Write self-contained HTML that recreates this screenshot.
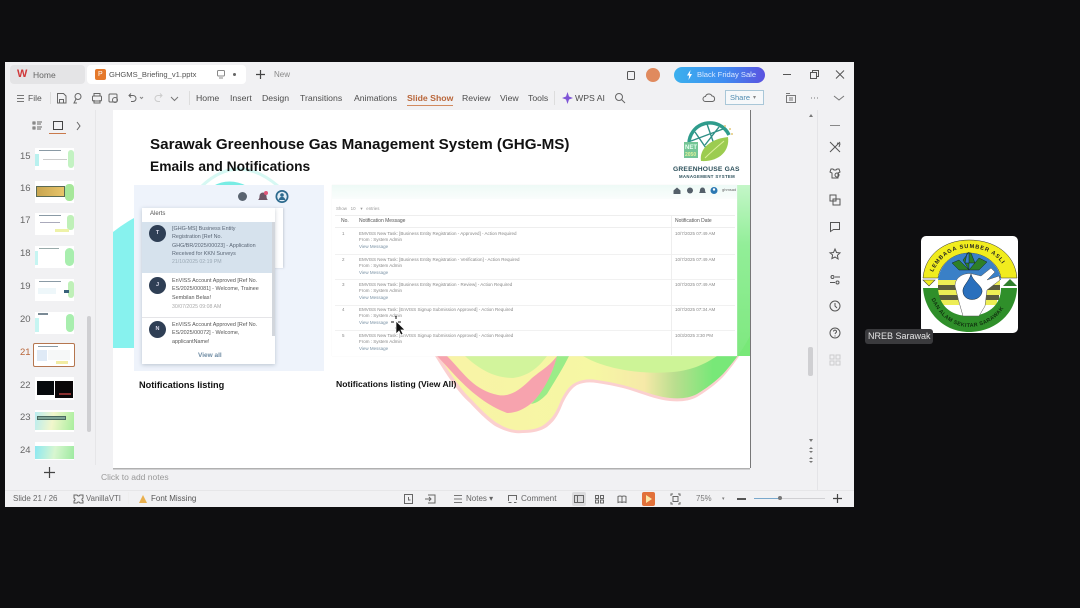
<!DOCTYPE html>
<html><head><meta charset="utf-8">
<style>
html,body{margin:0;padding:0;width:1080px;height:608px;overflow:hidden;background:#0e0e10;font-family:"Liberation Sans",sans-serif}
.a,.t{position:absolute}
.t{white-space:nowrap;color:#555;line-height:1}
#win{left:5px;top:62px;width:849px;height:445px;background:#f1f1f3;overflow:hidden}
svg.a{overflow:visible}
.mi{font-size:8.7px;color:#4d4d4d;top:94px}
.n{font-size:9.5px;color:#666;left:20px}
.th{left:35px;width:39px;height:22px;background:#fff;overflow:hidden}
.th i{position:absolute;display:block}
.nt{font-size:5.4px;color:#555;line-height:8.4px;white-space:nowrap}
.r{font-size:4.5px;color:#888;white-space:nowrap;line-height:6.3px}
.r b{font-weight:normal;color:#7b93a6}
.av{width:17px;height:17px;border-radius:50%;background:#2f3f55;color:#dde;font-size:5.5px;font-weight:bold;text-align:center;line-height:17px}
</style></head><body>
<div class="a" id="win" style="position:absolute"></div>

<!-- tab bar -->
<div class="a" style="left:10px;top:65px;width:75px;height:19px;background:#e4e4e6;border-radius:4px"></div>
<div class="a" style="left:87px;top:65px;width:159px;height:19px;background:#fff;border-radius:4px"></div>
<div class="t" style="left:17px;top:69px;font-size:11px;font-weight:bold;color:#d0383a">W</div>
<div class="t" style="left:33px;top:71px;font-size:8.5px;color:#666">Home</div>
<div class="a" style="left:95px;top:69px;width:11px;height:11px;background:#e5792b;border-radius:2px"></div>
<div class="t" style="left:98px;top:71px;font-size:7px;color:#fff">P</div>
<div class="t" style="left:109px;top:71px;font-size:7.6px;color:#555">GHGMS_Briefing_v1.pptx</div>
<svg class="a" style="left:216px;top:69px" width="10" height="10" fill="none" stroke="#888"><rect x="1.5" y="1.5" width="7" height="5.5" rx="1"/><path d="M3 9h4"/></svg>
<div class="a" style="left:233px;top:73px;width:3px;height:3px;border-radius:50%;background:#666"></div>
<svg class="a" style="left:255px;top:69px" width="11" height="11" stroke="#444" stroke-width="1.2"><path d="M5.5 1v9M1 5.5h9"/></svg>
<div class="t" style="left:274px;top:71px;font-size:8px;color:#888">New</div>
<svg class="a" style="left:626px;top:70px" width="10" height="10" fill="none" stroke="#555"><rect x="1.5" y="1.5" width="7" height="8" rx="1"/></svg>
<div class="a" style="left:646px;top:68px;width:14px;height:14px;border-radius:50%;background:#e08a5e"></div>
<div class="a" style="left:674px;top:67px;width:91px;height:16px;border-radius:8px;background:linear-gradient(90deg,#3bb0ee,#3f8cf0 55%,#5b52e0)"></div>
<svg class="a" style="left:686px;top:70px" width="7" height="10"><path d="M4.500 0L1 5.500h2.200L2.500 10 6 4H3.800z" fill="#fff"/></svg>
<div class="t" style="left:697px;top:71px;font-size:7.6px;color:#dbe9ff">Black Friday Sale</div>
<svg class="a" style="left:782px;top:69px" width="65" height="11" fill="none" stroke="#555"><path d="M1 5.5h8"/><rect x="28.5" y="3.5" width="6" height="6"/><path d="M30.5 3.5v-2h6v6h-2"/><path d="M54 1.5l8 8M62 1.5l-8 8"/></svg>

<!-- menu bar -->
<svg class="a" style="left:17px;top:94px" width="8" height="9" stroke="#777"><path d="M0 1.5h7M0 4.5h7M0 7.5h7"/></svg>
<div class="t" style="left:28px;top:94px;font-size:8.5px;color:#555">File</div>
<div class="a" style="left:50px;top:92px;width:1px;height:12px;background:#ddd"></div>
<svg class="a" style="left:56px;top:92px" width="130" height="13" fill="none" stroke="#666"><path d="M1.5 1.5h6l2.500 2.500v7h-8.500zM3.500 11V7.500h4V11"/><circle cx="22" cy="4.500" r="3"/><path d="M20 7l-2 4h3"/><rect x="36.500" y="4" width="9" height="5" rx="1"/><path d="M38 4V1.500h6V4M38 8v3h6V8"/><rect x="53" y="2" width="8" height="8" rx="1"/><circle cx="59" cy="8" r="2.500"/><path d="M73 3.500h4a3 3 0 0 1 0 6h-2M75 1.500l-2 2 2 2"/><path d="M84 5l1.500 1.500L87 5" stroke="#888"/><path d="M106 3.500h-4a3 3 0 0 0 0 6h2M104 1.500l2 2-2 2" stroke="#ccc"/><path d="M115 5l3.500 3.500L122 5" stroke="#777"/></svg>
<div class="a" style="left:189px;top:91px;width:1px;height:14px;background:#ddd"></div>
<div class="t mi" style="left:196px">Home</div>
<div class="t mi" style="left:230px">Insert</div>
<div class="t mi" style="left:262px">Design</div>
<div class="t mi" style="left:300px">Transitions</div>
<div class="t mi" style="left:354px">Animations</div>
<div class="t mi" style="left:407px;font-weight:bold;color:#b9663a">Slide Show</div>
<div class="a" style="left:407px;top:105px;width:46px;height:1px;background:#d28a5e"></div>
<div class="t mi" style="left:462px">Review</div>
<div class="t mi" style="left:500px">View</div>
<div class="t mi" style="left:528px">Tools</div>
<div class="a" style="left:554px;top:91px;width:1px;height:14px;background:#ddd"></div>
<svg class="a" style="left:562px;top:92px" width="11" height="12"><path d="M5.500 0L7 4.500 11 6 7 7.500 5.500 12 4 7.500 0 6 4 4.500z" fill="#7e54d6"/></svg>
<div class="t mi" style="left:575px">WPS AI</div>
<svg class="a" style="left:614px;top:92px" width="12" height="12" fill="none" stroke="#666"><circle cx="5" cy="5" r="3.500"/><path d="M7.500 7.500l3.500 3.500"/></svg>
<svg class="a" style="left:702px;top:92px" width="13" height="12" fill="none" stroke="#666"><path d="M3.500 9.500a2.500 2.500 0 0 1 0-5 3.500 3.500 0 0 1 6.500-.5 2.800 2.800 0 0 1 .5 5.500z"/></svg>
<div class="a" style="left:725px;top:90px;width:39px;height:15px;border:1px solid #a9c7d8;box-sizing:border-box;background:#f6f8fa"></div>
<div class="t" style="left:730px;top:94px;font-size:7.5px;color:#4f8bb0">Share</div>
<div class="t" style="left:753px;top:95px;font-size:6px;color:#888">▾</div>
<svg class="a" style="left:785px;top:92px" width="62" height="12" fill="none" stroke="#777"><rect x="1.500" y="3.500" width="9" height="7"/><path d="M1 1.500h4M4 6h4M4 8h4"/><path d="M26 6h1M29 6h1M32 6h1"/><path d="M49 4l5 4 5-4"/></svg>

<!-- left panel -->
<div class="a" style="left:95px;top:110px;width:1px;height:355px;background:#e6e6e8"></div>
<svg class="a" style="left:31px;top:120px" width="55" height="13" fill="none" stroke="#666"><path d="M2 2h2v2H2zM2 7h2v2H2zM6 2h5M6 4h4M6 7h5M6 9h4"/><rect x="22.500" y="1.500" width="9" height="8" stroke="#444"/><path d="M46 2l3 4-3 4"/></svg>
<div class="a" style="left:49px;top:133px;width:17px;height:1px;background:#c9794b"></div>
<div class="t n" style="top:152px">15</div><div class="t n" style="top:184px">16</div><div class="t n" style="top:216px">17</div><div class="t n" style="top:249px">18</div><div class="t n" style="top:282px">19</div><div class="t n" style="top:315px">20</div><div class="t n" style="top:348px;color:#b9663a">21</div><div class="t n" style="top:381px">22</div><div class="t n" style="top:413px">23</div><div class="t n" style="top:446px">24</div>

<div class="a th" style="top:148px"><i style="right:0;top:2px;width:6px;height:18px;background:#c3f2c2;border-radius:3px"></i><i style="left:0;top:6px;width:4px;height:12px;background:#b9f1ef"></i><i style="left:4px;top:2px;width:22px;height:1px;background:#8a9aa5"></i><i style="left:8px;top:11px;width:24px;height:1px;background:#ccc"></i></div>
<div class="a th" style="top:181px"><i style="left:1px;top:5px;width:29px;height:11px;background:linear-gradient(90deg,#c8a550,#e8c56a);border:1px solid #5a6a55;box-sizing:border-box"></i><i style="right:0;top:3px;width:9px;height:17px;background:#a6e79a;border-radius:4px"></i></div>
<div class="a th" style="top:213px"><i style="right:0;top:2px;width:7px;height:15px;background:#bff0b8;border-radius:3px"></i><i style="left:4px;top:2px;width:22px;height:1px;background:#8a9aa5"></i><i style="left:5px;top:9px;width:20px;height:1px;background:#aab"></i><i style="left:20px;top:16px;width:14px;height:3px;background:#eef2a8"></i></div>
<div class="a th" style="top:246px"><i style="right:0;top:2px;width:9px;height:18px;background:#a8eeae;border-radius:5px"></i><i style="left:0;top:5px;width:3px;height:14px;background:#c6f5f2"></i><i style="left:4px;top:2px;width:20px;height:1px;background:#9aa"></i></div>
<div class="a th" style="top:279px"><i style="right:0;top:2px;width:6px;height:17px;background:#bff0b8;border-radius:3px"></i><i style="left:29px;top:11px;width:5px;height:3px;background:#39617a"></i><i style="left:4px;top:2px;width:22px;height:1px;background:#8a9aa5"></i><i style="left:3px;top:9px;width:18px;height:6px;background:#eef7fa"></i></div>
<div class="a th" style="top:312px"><i style="right:0;top:2px;width:8px;height:18px;background:#a8eeae;border-radius:4px"></i><i style="left:3px;top:1px;width:10px;height:2px;background:#7a8a95"></i><i style="left:0;top:6px;width:4px;height:14px;background:#c6f5f2"></i></div>
<div class="a" style="left:33px;top:343px;width:42px;height:24px;border:1.5px solid #b5764f;border-radius:2px;box-sizing:border-box;background:#fff;overflow:hidden"><i style="position:absolute;left:3px;top:6px;width:10px;height:11px;background:#dfeaf6"></i><i style="position:absolute;left:14px;top:6px;width:22px;height:10px;background:#f6f8f8"></i><i style="position:absolute;left:22px;top:17px;width:12px;height:3px;background:#f2eca2"></i><i style="position:absolute;left:4px;top:2px;width:20px;height:1px;background:#8a9aa5"></i></div>
<div class="a th" style="top:377px;height:23px"><i style="left:2px;top:4px;width:17px;height:14px;background:#06090c"></i><i style="left:20px;top:4px;width:18px;height:17px;background:#0a0708"></i><i style="left:24px;top:16px;width:12px;height:2px;background:#8a3030"></i></div>
<div class="a th" style="top:410px"><i style="left:0;top:2px;width:39px;height:18px;background:linear-gradient(100deg,#b9ecf0,#f2f7cc 45%,#a9ee9e)"></i><i style="left:2px;top:6px;width:29px;height:4px;background:#7fa597;border:1px solid #4a6a60;box-sizing:border-box"></i></div>
<div class="a th" style="top:442px;height:18px"><i style="left:0;top:4px;width:39px;height:13px;background:linear-gradient(100deg,#8ce8f2,#d8f6d0 50%,#9eeaa0)"></i></div>
<div class="a" style="left:87px;top:316px;width:4px;height:116px;background:#cfcfd2;border-radius:2px"></div>
<svg class="a" style="left:44px;top:467px" width="11" height="11" stroke="#444" stroke-width="1.200"><path d="M5.500 0v11M0 5.500h11"/></svg>

<!-- notes -->
<div class="t" style="left:101px;top:473px;font-size:8.500px;color:#999">Click to add notes</div>

<!-- right scroll and tools -->
<div class="a" style="left:817px;top:110px;width:1px;height:380px;background:#e4e4e7"></div>
<div class="a" style="left:808px;top:347px;width:5px;height:29px;background:#cfcfd2;border-radius:2px"></div>
<svg class="a" style="left:808px;top:113px" width="6" height="5"><path d="M3 1l2 3H1z" fill="#777"/></svg>
<svg class="a" style="left:808px;top:438px" width="6" height="26" fill="#777"><path d="M1 1h4L3 4zM1 11l2-2 2 2zM1 13h4L3 15zM1 21l2-2 2 2zM1 23h4L3 25z"/></svg>
<svg class="a" style="left:828px;top:120px" width="14" height="14" stroke="#888"><path d="M2 5.500h10"/></svg>
<svg class="a" style="left:829px;top:141px" width="12" height="12" fill="none" stroke="#555"><path d="M1 1l10 10M11 1L1 11M3 9l-1.500 1.500M8 2l3 1-1 3"/></svg>
<svg class="a" style="left:829px;top:167px" width="12" height="13" fill="none" stroke="#555"><path d="M2 2h2l1 1h2l1-1h2l1 3-2 1v5H3V6L1 5z"/><circle cx="8" cy="8" r="2"/></svg>
<svg class="a" style="left:829px;top:194px" width="12" height="12" fill="none" stroke="#555"><rect x="1" y="1" width="6" height="6"/><rect x="4" y="5" width="7" height="6"/></svg>
<svg class="a" style="left:829px;top:221px" width="12" height="12" fill="none" stroke="#555"><path d="M1.500 1.500h9v7h-6l-3 2z"/></svg>
<svg class="a" style="left:829px;top:248px" width="12" height="12" fill="none" stroke="#555"><path d="M6 1l1.500 3.500 3.500.4-2.600 2.400.7 3.700L6 9l-3.100 1.600.7-3.700L1 4.900l3.500-.4z"/></svg>
<svg class="a" style="left:829px;top:274px" width="12" height="12" fill="none" stroke="#555"><circle cx="3.500" cy="3" r="1.500"/><path d="M6 3h5M1 8.500h5"/><circle cx="8.500" cy="8.500" r="1.500"/></svg>
<svg class="a" style="left:829px;top:300px" width="12" height="12" fill="none" stroke="#555"><circle cx="6" cy="6" r="5"/><path d="M6 3v3l2 2"/></svg>
<svg class="a" style="left:829px;top:327px" width="12" height="12" fill="none" stroke="#555"><circle cx="6" cy="6" r="5"/><path d="M4.500 4.500a1.500 1.500 0 1 1 2 1.500L6 7M6 8.500v1"/></svg>
<svg class="a" style="left:829px;top:354px" width="12" height="12" fill="none" stroke="#ccc"><rect x="1" y="1" width="4" height="4"/><rect x="7" y="1" width="4" height="4"/><rect x="1" y="7" width="4" height="4"/><rect x="7" y="7" width="4" height="4"/></svg>

<!-- slide -->
<div class="a" style="left:113px;top:110px;width:637px;height:358px;background:#fff;box-shadow:1px 0 0 #777,0 1.500px 0 #b0b0b0;overflow:hidden" id="slide">
<svg class="a" style="left:0;top:0" width="637" height="358">
<defs>
<linearGradient id="gr" x1="0" y1="0" x2="0" y2="1"><stop offset="0" stop-color="#c4f6c8"/><stop offset=".35" stop-color="#92ee98"/><stop offset="1" stop-color="#7ee87f"/></linearGradient>
<linearGradient id="g2" x1="0" x2="1"><stop offset="0" stop-color="#f8f3a6"/><stop offset=".5" stop-color="#f6f7a4"/><stop offset=".66" stop-color="#f6e9a8"/><stop offset=".76" stop-color="#b9de8e"/><stop offset=".88" stop-color="#78e878"/><stop offset="1" stop-color="#78e878"/></linearGradient>
</defs>
<path d="M0 122 Q10 114 21 108 V238 L0 238 Z" fill="#87f2ee"/>
<path d="M89 76 Q125 42 165 76" fill="none" stroke="#d6f8f3" stroke-width="3"/>
<path d="M100 76 Q116 67 134 76 Z" fill="#78ece4"/>
<path d="M624 75 H637 V228 L624 248 Z" fill="url(#gr)"/>
<!-- wave -->
<path d="M322 246 C332 262 345 283 357 293 C368 305 378 314 384 317 C394 322 402 324 410 323 C420 323 428 321 434 317 C443 310 446 303 450 293 C455 283 459 278 464 275 C471 272 477 272 484 273 C497 275 507 277 517 280 C532 285 545 290 557 291 C568 292 576 291 584 287 C594 281 603 274 610 267 C618 258 628 245 637 228 V246 Z" fill="#fbd0d0"/>
<path d="M326 246 C336 262 348 280 359 290 C370 302 380 311 386 314 C394 319 402 321 410 320 C420 320 427 318 432 314 C441 307 444 300 448 290 C453 280 458 274 464 272 C471 269 477 269 484 270 C497 272 507 274 517 277 C532 282 545 287 557 288 C568 289 576 288 584 284 C594 278 603 271 610 264 C618 255 628 243 637 226 V246 Z" fill="url(#g2)"/>
<path d="M324 246 C340 262 360 290 394 303 C412 303 425 288 432 278 C438 265 442 255 444 246 C435 258 425 262 417 270 C405 282 395 287 385 285 C360 280 350 262 334 246Z" fill="#f7a3ae"/>
<path d="M352 246 C365 258 380 268 400 268 C415 266 425 258 434 246 Z" fill="#d2f49c"/>
<path d="M444 246 L456 246 C450 258 445 266 434 284 C428 290 424 293 418 294 C432 280 440 262 444 246Z" fill="#9aec88"/>
<path d="M470 246 C490 258 525 265 560 262 C580 260 592 254 604 246 Z" fill="#cdf497"/>
</svg>

<div class="a" style="left:21px;top:75px;width:190px;height:186px;background:#eef3fb"></div>
<div class="a" style="left:219px;top:75px;width:405px;height:171px;background:#fff;box-shadow:0 0 1px #eee"></div>
<div class="a" style="left:219px;top:75px;width:405px;height:14px;background:linear-gradient(180deg,#eefaf6,#fafdfc)"></div>

<div class="t" style="left:37px;top:27px;font-size:15.200px;font-weight:bold;color:#111">Sarawak Greenhouse Gas Management System (GHG-MS)</div>
<div class="t" style="left:37px;top:50px;font-size:13.800px;font-weight:bold;color:#111">Emails and Notifications</div>

<!-- logo -->
<svg class="a" style="left:570px;top:13px" width="50" height="42">
<path d="M6 22 A21 21 0 0 1 46 12" fill="none" stroke="#2f9c8c" stroke-width="3.500"/>
<path d="M12 9 L25 28 M24 1 L32 24 M8 18 L40 6 M36 4 L22 22" stroke="#2f8f86" stroke-width="1.400" fill="none"/>
<rect x="1" y="19" width="14" height="16" fill="#75c596"/>
<text x="2" y="26" font-size="6" font-weight="bold" fill="#e8fff0" font-family="Liberation Sans">NET</text>
<text x="2" y="33" font-size="5" font-weight="bold" fill="#e2f29b" font-family="Liberation Sans">2050</text>
<path d="M18 38 C16 26 27 16 45 14 C47 28 36 39 18 38Z" fill="#9ccc50"/>
<path d="M22 35 C28 29 34 24 41 18" stroke="#dcef9d" fill="none"/>
<circle cx="42" cy="3" r="1" fill="#e3c87a"/><circle cx="47" cy="6" r="1" fill="#e3c87a"/><circle cx="49" cy="11" r="1" fill="#e3c87a"/>
</svg>
<div class="t" style="left:560px;top:57px;font-size:6.700px;font-weight:bold;color:#2b4f5a;letter-spacing:.2px">GREENHOUSE GAS</div>
<div class="t" style="left:566px;top:65px;font-size:4.300px;font-weight:bold;color:#2b4f5a;letter-spacing:.35px">MANAGEMENT SYSTEM</div>

<!-- left notification panel -->
<svg class="a" style="left:120px;top:79px" width="56" height="16">
<circle cx="9.500" cy="7.500" r="4.500" fill="#5a6470"/>
<path d="M25 11 q1.500-1 1.500-4 a3.500 3.500 0 0 1 7 0 q0 3 1.500 4z" fill="#6d5566"/>
<circle cx="33" cy="4" r="2" fill="#e0557a"/>
<circle cx="49" cy="7.500" r="6.500" fill="#2d6a8e"/><circle cx="49" cy="7.500" r="4.800" fill="#e2eef6"/><circle cx="49" cy="6" r="1.800" fill="#2d6a8e"/><path d="M45.800 11 a3.200 3.200 0 0 1 6.400 0z" fill="#2d6a8e"/>
</svg>
<div class="a" style="left:160px;top:98px;width:10px;height:60px;background:#fff;box-shadow:1px 0 2px rgba(90,100,120,.25)"></div>
<div class="a" style="left:29px;top:98px;width:133px;height:156px;background:#fff;box-shadow:0 1px 4px rgba(70,90,110,.3)"></div>
<div class="t" style="left:37px;top:101px;font-size:6px;color:#555">Alerts</div>
<div class="a" style="left:29px;top:112px;width:133px;height:51px;background:#d6e2ed"></div>
<div class="a" style="left:159px;top:112px;width:3px;height:114px;background:#d2d6dc"></div>
<div class="a av" style="left:36px;top:115px">T</div>
<div class="a nt" style="left:59px;top:115px;color:#5a6675">[GHG-MS] Business Entity<br>Registration [Ref No.<br>GHG/BR/2025/00023] - Application<br>Received for KKN Surveys</div>
<div class="t" style="left:59px;top:150px;font-size:5.200px;color:#9aa8b4">21/10/2025 02:19 PM</div>
<div class="a av" style="left:36px;top:167px">J</div>
<div class="a nt" style="left:59px;top:167px">EnVISS Account Approved [Ref No.<br>ES/2025/00081] - Welcome, Trainee<br>Sembilan Belas!</div>
<div class="t" style="left:59px;top:195px;font-size:5.200px;color:#aaa">30/07/2025 09:08 AM</div>
<div class="a" style="left:29px;top:207px;width:130px;height:1px;background:#e5e5e8"></div>
<div class="a av" style="left:36px;top:211px">N</div>
<div class="a nt" style="left:59px;top:211px">EnVISS Account Approved [Ref No.<br>ES/2025/00072] - Welcome,<br>applicantName!</div>
<div class="a" style="left:29px;top:238px;width:133px;height:16px;background:#fff"></div>
<div class="t" style="left:85px;top:243px;font-size:6.500px;font-weight:bold;color:#6e8ba3">View all</div>

<!-- right table -->
<svg class="a" style="left:560px;top:75px" width="62" height="11">
<path d="M0.500 5.500l3.500-3 3.500 3v3.500H0.500z" fill="#55606a"/><circle cx="17" cy="5.500" r="3" fill="#55606a"/><path d="M26 8q1-1 1-3a2.500 2.500 0 0 1 5 0q0 2 1 3z" fill="#55606a"/><circle cx="41" cy="5.500" r="3.500" fill="#2c78b3"/><circle cx="41" cy="4.500" r="1.200" fill="#fff"/>
</svg>
<div class="t" style="left:609px;top:78px;font-size:4px;color:#666">ghmsad</div>
<div class="t" style="left:223px;top:97px;font-size:4.400px;color:#999">Show &nbsp; 10 &nbsp;&nbsp; ▾ &nbsp; entries</div>
<div class="a" style="left:222px;top:105px;width:400px;height:1px;background:#eee"></div>
<div class="a" style="left:222px;top:117px;width:400px;height:1px;background:#eee"></div>
<div class="a" style="left:222px;top:144px;width:400px;height:1px;background:#f1f1f1"></div>
<div class="a" style="left:222px;top:169px;width:400px;height:1px;background:#f1f1f1"></div>
<div class="a" style="left:222px;top:195px;width:400px;height:1px;background:#f1f1f1"></div>
<div class="a" style="left:222px;top:220px;width:400px;height:1px;background:#f1f1f1"></div>
<div class="a" style="left:558px;top:105px;width:1px;height:140px;background:#eee"></div>
<div class="t" style="left:228px;top:109px;font-size:5px;color:#555">No.</div>
<div class="t" style="left:246px;top:109px;font-size:5px;color:#555">Notification Message</div>
<div class="t" style="left:562px;top:109px;font-size:5px;color:#555">Notification Date</div>

<div class="a r" style="left:229px;top:121px">1</div>
<div class="a r" style="left:246px;top:121px">EMVISS New Task: [Business Entity Registration - Approved] - Action Required<br>From : System Admin<br><b>View Message</b></div>
<div class="a r" style="left:562px;top:121px">10/7/2025 07:49 AM</div>
<div class="a r" style="left:229px;top:147px">2</div>
<div class="a r" style="left:246px;top:147px">EMVISS New Task: [Business Entity Registration - Verification] - Action Required<br>From : System Admin<br><b>View Message</b></div>
<div class="a r" style="left:562px;top:147px">10/7/2025 07:49 AM</div>
<div class="a r" style="left:229px;top:172px">3</div>
<div class="a r" style="left:246px;top:172px">EMVISS New Task: [Business Entity Registration - Review] - Action Required<br>From : System Admin<br><b>View Message</b></div>
<div class="a r" style="left:562px;top:172px">10/7/2025 07:49 AM</div>
<div class="a r" style="left:229px;top:197px">4</div>
<div class="a r" style="left:246px;top:197px">EMVISS New Task: [EnVISS Signup Submission Approved] - Action Required<br>From : System Admin<br><b>View Message</b></div>
<div class="a r" style="left:562px;top:197px">10/7/2025 07:34 AM</div>
<div class="a r" style="left:229px;top:223px">5</div>
<div class="a r" style="left:246px;top:223px">EMVISS New Task: [EnVISS Signup Submission Approved] - Action Required<br>From : System Admin<br><b>View Message</b></div>
<div class="a r" style="left:562px;top:223px">10/3/2025 3:30 PM</div>

<div class="t" style="left:26px;top:271px;font-size:9.200px;font-weight:bold;color:#111">Notifications listing</div>
<div class="t" style="left:223px;top:270px;font-size:8.600px;font-weight:bold;color:#111">Notifications listing (View All)</div>
</div>

<!-- cursor -->
<svg class="a" style="left:390px;top:315px" width="16" height="21">
<path d="M6 4V1M6 14v-2M1 7h3M8 7h3" stroke="#111"/>
<path d="M6 6v13l3-3 2 4 2-1-2-4h4z" fill="#111" stroke="#fff" stroke-width=".7"/>
</svg>

<!-- status bar -->
<div class="a" style="left:5px;top:490px;width:849px;height:1px;background:#e6e6e8"></div>
<div class="t" style="left:13px;top:495px;font-size:8px;color:#666">Slide 21 / 26</div>
<svg class="a" style="left:73px;top:494px" width="11" height="10" fill="none" stroke="#666"><path d="M1 1h3l1 1h1l1-1h3v3l-1 1v1l1 1v2H7L6 8H5L4 9H1V7l1-1V5L1 4z"/></svg>
<div class="t" style="left:86px;top:495px;font-size:7.800px;color:#666">VanillaVTI</div>
<div class="a" style="left:128px;top:492px;width:1px;height:12px;background:#eee"></div>
<svg class="a" style="left:138px;top:494px" width="10" height="10"><path d="M5 1l4 8H1z" fill="#e9b04e"/></svg>
<div class="t" style="left:151px;top:495px;font-size:8px;color:#555">Font Missing</div>
<svg class="a" style="left:403px;top:493px" width="35" height="12" fill="none" stroke="#666"><rect x="1.500" y="1.500" width="8" height="9"/><path d="M5.500 4v3h2"/><path d="M25 2h7v8h-7M22 6h6M26 4l2 2-2 2"/></svg>
<svg class="a" style="left:453px;top:494px" width="10" height="10" stroke="#777"><path d="M1 1.500h8M1 5h8M1 8.500h8"/></svg>
<div class="t" style="left:466px;top:495px;font-size:8px;color:#666">Notes ▾</div>
<svg class="a" style="left:507px;top:494px" width="11" height="10" fill="none" stroke="#666"><path d="M1.500 7V1.500h8V6M1.500 8.500h3M7 8.500h2.500"/></svg>
<div class="t" style="left:521px;top:495px;font-size:8.200px;color:#666">Comment</div>
<div class="a" style="left:572px;top:492px;width:14px;height:14px;background:#dcdcde;border-radius:2px"></div>
<svg class="a" style="left:574px;top:494px" width="60" height="10" fill="none" stroke="#666"><rect x=".5" y="1.500" width="9" height="7"/><path d="M3.500 1.500v7"/><path d="M21.500 1.500h3v3h-3zM26.500 1.500h3v3h-3zM21.500 6h3v3h-3zM26.500 6h3v3h-3z"/><path d="M48 2.500q-2-1-4 0v6q2-1 4 0 2-1 4 0v-6q-2-1-4 0zM48 2.500v6"/></svg>
<div class="a" style="left:642px;top:492px;width:13px;height:14px;background:#e2713a;border-radius:2px"></div>
<svg class="a" style="left:645px;top:495px" width="8" height="8"><path d="M1 0l6 4-6 4z" fill="#fbe7a6"/></svg>
<svg class="a" style="left:670px;top:493px" width="11" height="12" fill="none" stroke="#666"><path d="M1 3V1h2M8 1h2v2M1 9v2h2M8 11h2V9"/><rect x="3" y="3.500" width="5" height="5"/></svg>
<div class="t" style="left:696px;top:495px;font-size:7.800px;color:#777">75%</div>
<div class="t" style="left:722px;top:497px;font-size:5px;color:#777">▾</div>
<div class="a" style="left:737px;top:498px;width:9px;height:1.500px;background:#555"></div>
<div class="a" style="left:754px;top:498px;width:71px;height:1px;background:#d0d0d3"></div>
<div class="a" style="left:754px;top:498px;width:25px;height:1px;background:#79a8cc"></div>
<div class="a" style="left:778px;top:496px;width:4px;height:4px;border-radius:50%;background:#777"></div>
<svg class="a" style="left:833px;top:494px" width="9" height="9" stroke="#444" stroke-width="1.200"><path d="M4.500 0v9M0 4.500h9"/></svg>

<!-- participant tile -->
<div class="a" style="left:921px;top:236px;width:97px;height:97px;background:#fff;border-radius:5px"></div>
<svg class="a" style="left:921px;top:236px" width="97" height="97">
<defs><path id="ta" d="M11 38 C20 18 34 12 48 12 C64 12 78 18 87 38"/><path id="tb" d="M10 62 C18 82 34 91 48 91 C64 91 80 82 88 62"/></defs>
<path d="M2 42 C4 18 24 4 48 4 C74 4 94 18 96 42 L80 42 C78 28 64 17 48 17 C32 17 19 28 17 42Z" fill="#f1ec1e" stroke="#333" stroke-width=".5"/>
<path d="M17 44 C19 28 32 17 48 17 C64 17 78 28 80 44Z" fill="#3a80c7"/>
<path d="M17 44h19v5H17zM17 54h19v5H17zM19 64h19v5H19zM56 44h23v5H56zM60 54h19v5H60zM58 64h18v5H58z" fill="#eded55"/>
<path d="M17 49h19v5H17zM17 59h20v5H17zM58 49h21v5H58zM60 59h18v5H60z" fill="#5a5b3e"/>
<path d="M2 52 H17 C18 70 30 80 48 80 C66 80 80 70 80 52 H96 C95 78 74 96 48 96 C24 96 4 78 2 52Z" fill="#2f8f2a"/>
<path d="M2 44h12l-6 6z" fill="#f1ec1e" stroke="#444" stroke-width=".6"/>
<path d="M82 50l7-7 7 7z" fill="#2f7f2c"/>
<path d="M34 50 C34 40 45 36 52 38 L60 40 L70 32 L74 36 L66 44 L78 40 L79 44 L66 54 L64 70 L58 80 H42 L38 66Z" fill="#fff" stroke="#555" stroke-width=".5"/>
<path d="M48 34 L38 24 L31 27 L38 34Z M48 34 L48 16 L42 24Z M48 34 L58 22 L66 26 L58 34Z M46 17 L50 17 L54 27 L44 27Z" fill="#2d7f28" stroke="#123" stroke-width=".5"/>
<path d="M50 38 C48 46 41 50 42 56 C43 66 59 66 61 56 C62 50 52 46 50 38Z" fill="#2a70bd" stroke="#123" stroke-width=".5"/>
<text font-size="5.600" font-weight="bold" fill="#222" font-family="Liberation Sans" letter-spacing=".9"><textPath href="#ta" startOffset="2">LEMBAGA SUMBER ASLI</textPath></text>
<text font-size="5.400" font-weight="bold" fill="#10300f" font-family="Liberation Sans" letter-spacing=".35"><textPath href="#tb" startOffset="1">DAN ALAM SEKITAR SARAWAK</textPath></text>
</svg>
<div class="a" style="left:865px;top:329px;width:68px;height:15px;background:#3a3a3d;border-radius:3px"></div>
<div class="t" style="left:868px;top:331px;font-size:9px;color:#e4e4e4;line-height:11px">NREB Sarawak</div>
</body></html>
